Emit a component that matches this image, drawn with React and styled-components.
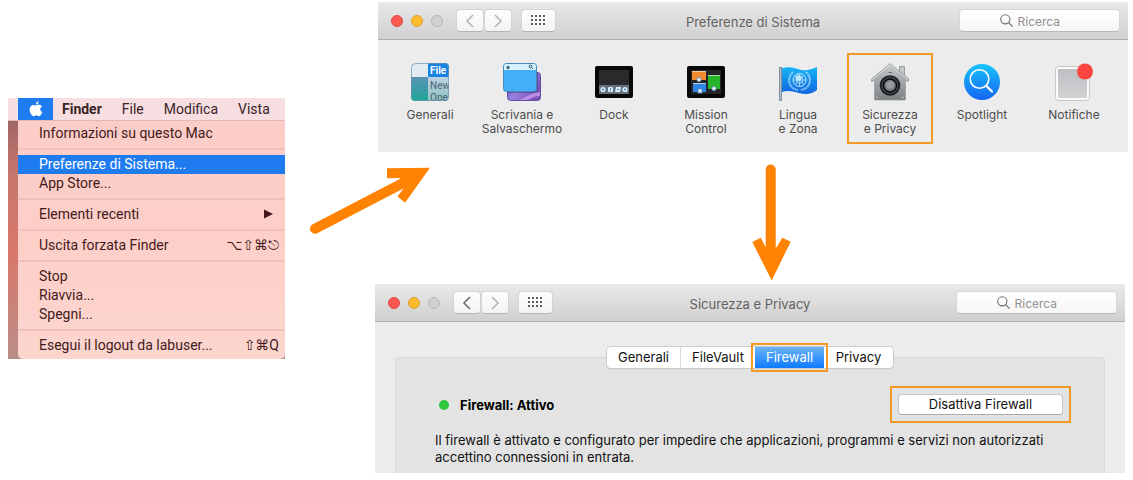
import styled, { createGlobalStyle } from 'styled-components';

const GlobalStyle = createGlobalStyle`
  body {
    margin: 0;
    background: #ffffff;
    font-family: Inter, 'Liberation Sans', sans-serif;
    font-size: 13px;
  }

  button,
  input {
    font: inherit;
  }
`;

const Page = styled.main`
  display: grid;
  grid-template-columns: 277px 90px minmax(0, 1fr);
  align-items: start;
  padding: 2px 5px 0 8px;
`;

/* Finder menu */

const FinderMenu = styled.section`
  grid-column: 1;
  grid-row: 1 / 4;
  margin-top: 96px;
  padding-left: 10px;
  background: linear-gradient(#8f5f63, #c9776c 30%, #d9786b 60%, #b98e88);
  font-family: Roboto, 'Liberation Sans', sans-serif;
  font-size: 14px;
  color: #431a1b;
`;

const MenuBar = styled.div`
  display: flex;
  height: 22px;
  margin-left: -10px;
  padding-left: 10px;
  background: #f7dfe1;
  border-bottom: 1px solid #dfb9ba;
`;

const AppleButton = styled.button`
  width: 35px;
  height: 22px;
  padding: 0;
  border: 0;
  background: #1e7bf0;
  display: flex;
  justify-content: center;
  align-items: center;
`;

const MenuBarButton = styled.button`
  padding: 0 11px 0 9px;
  border: 0;
  background: none;
  line-height: 22px;
  color: #3a2428;
  font-weight: ${(props) => (props.$bold ? 700 : 400)};
`;

const MenuList = styled.div`
  padding: 3px 0 4px;
  background: linear-gradient(#fccdc8, #fdcfc8 50%, #fcd5cf);
  border-radius: 0 0 5px 5px;
`;

const MenuItem = styled.button`
  display: flex;
  justify-content: space-between;
  align-items: center;
  width: 100%;
  height: 19px;
  padding: 0 6px 1px 21px;
  border: 0;
  text-align: left;
  background: ${(props) => (props.$active ? '#1e7bf0' : 'none')};
  color: ${(props) => (props.$active ? '#ffffff' : '#431a1b')};
`;

const Shortcut = styled.span`
  font-family: Roboto, 'DejaVu Sans', sans-serif;
`;

const SubmenuArrow = styled.svg`
  margin-right: 6px;
`;

const MenuSeparator = styled.hr`
  height: 2px;
  margin: 5px 0;
  border: 0;
  background: #efc0bc;
`;

/* Arrows between the steps */

const Connector = styled.div`
  grid-column: 2 / 4;
  grid-row: 2;
  display: flex;
  align-items: flex-start;
  padding: 12px 18px 3px 24px;
`;

const DownArrow = styled.svg`
  margin: 0 auto;
`;

/* Windows */

const Window = styled.section`
  grid-column: 3;
  grid-row: ${(props) => props.$row};
  margin: ${(props) => (props.$row === 1 ? '0 0 0 3px' : '0 3px 0 0')};
  background: #ececec;
`;

const TitleBar = styled.header`
  display: grid;
  grid-template-columns: 1fr auto 1fr;
  align-items: center;
  height: 38px;
  box-sizing: border-box;
  padding: 0 8px;
  background: linear-gradient(#e9e9e9, #d0d0d0);
  border-bottom: 1px solid #acacac;
  border-radius: 3px 3px 0 0;
`;

const Controls = styled.div`
  display: flex;
  align-items: center;
`;

const Lights = styled.div`
  display: flex;
  gap: 8px;
  margin: 0 13px 0 5px;
`;

const Light = styled.button`
  width: 12px;
  height: 12px;
  padding: 0;
  border: 1px solid ${(props) => props.$border};
  border-radius: 50%;
  background: ${(props) => props.$color};
`;

const ToolButton = styled.button`
  display: flex;
  justify-content: center;
  align-items: center;
  width: ${(props) => (props.$wide ? 35 : 28)}px;
  height: 23px;
  margin-left: ${(props) => (props.$wide ? 9 : 0)}px;
  padding: 0;
  border: 1px solid #d4d4d4;
  border-bottom-color: #b6b6b6;
  border-radius: 4px;
  background: linear-gradient(#fefefe, #f3f3f3);
  color: ${(props) => (props.$dim ? '#b5b5b5' : '#6a6a6a')};
`;

const WindowTitle = styled.h1`
  margin: 0;
  padding-top: 3px;
  font-size: 13px;
  font-weight: 400;
  color: #626262;
`;

const SearchBox = styled.label`
  justify-self: end;
  display: flex;
  justify-content: center;
  align-items: center;
  gap: 5px;
  width: 161px;
  height: 23px;
  box-sizing: border-box;
  padding-right: 18px;
  border: 1px solid #d6d6d6;
  border-bottom-color: #b9b9b9;
  border-radius: 4px;
  background: linear-gradient(#ffffff, #f6f6f6);
  font-size: 12px;
`;

const SearchInput = styled.input`
  width: 44px;
  padding: 1px 0 0;
  border: 0;
  outline: 0;
  background: none;

  &::placeholder {
    color: #929292;
    opacity: 1;
  }
`;

/* Preference panes */

const PaneGrid = styled.div`
  display: grid;
  grid-template-columns: repeat(8, minmax(0, 1fr));
  padding: 13px 8px 8px 6px;
`;

const Pane = styled.button`
  display: flex;
  flex-direction: column;
  align-items: center;
  height: 91px;
  margin: 0 3px;
  padding: 8px 0 0;
  border: 2px solid ${(props) => (props.$marked ? '#f39a26' : 'transparent')};
  background: none;
  font-size: 12px;
  line-height: 14px;
  color: #4c4c4c;
  white-space: pre-line;
`;

const PaneLabel = styled.span`
  margin-top: 7px;
`;

/* Firewall settings */

const Settings = styled.div`
  display: flex;
  flex-direction: column;
  padding: 25px 20px 0;
`;

const Tabs = styled.div`
  z-index: 1;
  align-self: center;
  display: flex;
  height: 21px;
  margin-bottom: -11px;
  background: #ffffff;
  border-radius: 4px;
  box-shadow: 0 0 0 1px #cccccc, 0 1px 1px 0 #b5b5b5;
`;

const Tab = styled.button`
  width: ${(props) => (props.$wide ? 74 : 69)}px;
  padding: 0 0 2px;
  border: 0;
  border-right: ${(props) => (props.$line ? '1px solid #d9d9d9' : '0')};
  outline: ${(props) => (props.$active ? '2px solid #f39a26' : '0')};
  outline-offset: 2px;
  background: ${(props) => (props.$active ? 'linear-gradient(#6bb3fa, #0f7bff)' : 'none')};
  color: ${(props) => (props.$active ? '#ffffff' : '#111111')};
`;

const Panel = styled.div`
  padding: 28px 33px 7px 39px;
  background: #e3e3e3;
  border: 1px solid #d9d9d9;
  border-bottom: 0;
  border-radius: 4px 4px 0 0;
`;

const StatusRow = styled.div`
  display: flex;
  align-items: center;
  gap: 11px;
  padding-left: 4px;
`;

const StatusDot = styled.span`
  width: 10px;
  height: 10px;
  border-radius: 50%;
  background: #2dc63f;
`;

const StatusText = styled.strong`
  flex: 1;
  color: #000000;
`;

const ButtonFrame = styled.div`
  padding: 6px;
  border: 2px solid #f39a26;
`;

const PushButton = styled.button`
  display: block;
  width: 165px;
  height: 21px;
  padding: 0 0 2px;
  border: 1px solid #c6c6c6;
  border-bottom-color: #aaaaaa;
  border-radius: 4px;
  background: #ffffff;
  color: #111111;
`;

const Description = styled.p`
  margin: 9px 0 0;
  line-height: 17px;
  color: #111111;
`;

const AppleIcon = () => (
  <svg width="14" height="16" viewBox="0 0 14 16" fill="#ffffff" aria-hidden="true">
    <path d="M9.6 0.4C9.7 2 8.400 3.600 6.900 3.600 6.700 2.100 8.100 0.600 9.600 0.400ZM7.100 4.500C7.700 4.500 8.600 3.800 9.900 3.800 11.300 3.800 12.300 4.500 12.900 5.400 10.500 6.900 10.900 10.100 13.400 11.100 12.700 13 11.400 15.200 10 15.200 8.900 15.200 8.600 14.500 7.300 14.500 6 14.500 5.600 15.200 4.600 15.200 2.800 15.200 0.600 11.800 0.600 8.600 0.600 5.500 2.500 3.900 4.300 3.900 5.500 3.900 6.400 4.500 7.100 4.500Z" />
  </svg>
);

const Chevron = ({ d }) => (
  <svg width="10" height="14" viewBox="0 0 10 14" fill="none" stroke="currentColor" strokeWidth="1.6" aria-hidden="true">
    <path d={d} />
  </svg>
);

const GridIcon = () => (
  <svg width="15" height="11" viewBox="0 0 15 11" fill="#5a5a5a" aria-hidden="true">
    {[0, 4, 8].map((y) =>
      [0, 4, 8, 12].map((x) => <rect key={`${x}-${y}`} x={x} y={y} width="2" height="2" />)
    )}
  </svg>
);

const SearchIcon = () => (
  <svg width="13" height="13" viewBox="0 0 13 13" fill="none" stroke="#6e6e6e" strokeWidth="1.1" aria-hidden="true">
    <circle cx="5.300" cy="5.300" r="4.600" />
    <path d="M8.600 8.600L12.500 12.500" />
  </svg>
);

const GeneralIcon = () => (
  <svg width="38" height="38" viewBox="0 0 38 38" aria-hidden="true">
    <defs>
      <linearGradient id="generalLeft" x2="0" y2="1">
        <stop stopColor="#5a92b6" />
        <stop offset="1" stopColor="#1da695" />
      </linearGradient>
      <linearGradient id="generalRight" x2="0" y2="1">
        <stop stopColor="#bdd2e2" />
        <stop offset="1" stopColor="#8fc3c2" />
      </linearGradient>
      <clipPath id="generalClip">
        <rect width="38" height="38" rx="4" />
      </clipPath>
    </defs>
    <g clipPath="url(#generalClip)">
      <rect width="38" height="38" fill="#e3ebf2" />
      <rect y="14" width="17" height="24" fill="url(#generalLeft)" />
      <rect x="17" y="14" width="21" height="24" fill="url(#generalRight)" />
      <rect x="17" width="21" height="14" fill="#1684e5" />
      <text x="19" y="11" fontFamily="Roboto" fontSize="10" fontWeight="700" fill="#ffffff">File</text>
      <text x="19" y="26" fontFamily="Roboto" fontSize="10" fill="#4b6272">New</text>
      <text x="19" y="38" fontFamily="Roboto" fontSize="10" fill="#4b6272">Ope</text>
    </g>
    <rect x="0.500" y="0.500" width="37" height="37" rx="4" fill="none" stroke="#6f95ad" strokeOpacity="0.700" />
  </svg>
);

const DesktopIcon = () => (
  <svg width="38" height="38" viewBox="0 0 38 38" aria-hidden="true">
    <defs>
      <linearGradient id="desktopBack" x2="1" y2="0.6">
        <stop stopColor="#4c4fa8" />
        <stop offset="0.500" stopColor="#9a7fe0" />
        <stop offset="1" stopColor="#7a4fb8" />
      </linearGradient>
    </defs>
    <rect x="4.500" y="9.500" width="33" height="28" rx="3" fill="url(#desktopBack)" stroke="#5d529f" />
    <path d="M14 37C22 36 26 30 37 29V33C31 33 28 36 24 37Z" fill="#d6a4f2" fillOpacity="0.700" />
    <path d="M4 29.500H33Q34.500 29.500 34.500 28V9" fill="none" stroke="#2b2760" strokeOpacity="0.400" />
    <rect x="0.500" y="0.500" width="33" height="28" rx="3" fill="#45aef8" stroke="#4689b8" />
    <path d="M1 7V3Q1 1 3 1H31Q33 1 33 3V7Z" fill="#d6f0fc" />
    <ellipse cx="5" cy="4.500" rx="1.500" ry="1.700" fill="#3a5f7a" />
    <circle cx="27.500" cy="3.500" r="1.400" fill="none" stroke="#31566f" />
    <path d="M28.500 4.500L30 6" stroke="#31566f" />
  </svg>
);

const DockIcon = () => (
  <svg width="38" height="38" viewBox="0 0 38 38" aria-hidden="true">
    <rect y="3" width="38" height="32" rx="2" fill="#080808" />
    <rect x="4" y="7" width="30" height="24" fill="#2a2a2c" />
    <rect x="4" y="22" width="30" height="9" fill="#62717d" />
    <g fill="#dcecf8">
      <circle cx="8" cy="26.500" r="2.600" />
      <rect x="13" y="24" width="5" height="5" rx="1" />
      <path d="M21 24H26L25 29H20Z" />
      <circle cx="30" cy="26.500" r="2.600" />
    </g>
    <g fill="#377bb5">
      <circle cx="8" cy="26.500" r="1" />
      <rect x="15" y="25" width="1" height="3" />
      <rect x="22" y="26" width="2" height="1" />
      <circle cx="30" cy="26.500" r="1" />
    </g>
  </svg>
);

const MissionIcon = () => (
  <svg width="38" height="38" viewBox="0 0 38 38" aria-hidden="true">
    <rect y="3" width="38" height="32" rx="2" fill="#080808" />
    <rect x="4" y="7" width="30" height="24" fill="#252528" />
    <rect x="5" y="8" width="14" height="9" fill="#f28a2f" />
    <rect x="21" y="12" width="12" height="14" fill="#25b52d" />
    <rect x="6" y="20" width="13" height="9" fill="#2f86e8" />
    <path d="M5 8.500H19M21 12.500H33M6 20.500H19" stroke="#f1e4d8" strokeOpacity="0.700" />
    <g fill="#e3edf6" stroke="#5786b3" strokeWidth="0.800">
      <circle cx="12" cy="16.500" r="2.200" />
      <circle cx="27" cy="25.500" r="2.200" />
      <rect x="11" y="26" width="4" height="4" />
    </g>
  </svg>
);

const FlagIcon = () => (
  <svg width="38" height="38" viewBox="0 0 38 38" aria-hidden="true">
    <defs>
      <linearGradient id="flagBlue" x2="0" y2="1">
        <stop stopColor="#16b5f6" />
        <stop offset="1" stopColor="#1165e0" />
      </linearGradient>
    </defs>
    <path d="M3 5C12 3 16 5 22 7 28 8 33 6 38 4V27C33 31 27 32 20 30 13 28 8 27 3 29Z" fill="url(#flagBlue)" />
    <g fill="none" stroke="#d9f1ff">
      <circle cx="20.500" cy="17" r="6.500" strokeWidth="0.900" />
      <circle cx="20.500" cy="17" r="3.500" strokeWidth="0.700" />
      <path d="M20.500 10.500V23.500M14 17H27M16 12.500L25 21.500M25 12.500L16 21.500" strokeWidth="0.600" />
      <path d="M14 9C7.500 15 9 25 19 27M27 9C33.500 15 32 25 22 27" strokeWidth="2" strokeDasharray="2 0.500" strokeOpacity="0.600" />
    </g>
    <path d="M16 14.500L19 11.500 23 13.500 22 17 18 18Z" fill="#cfeeff" fillOpacity="0.800" />
    <rect x="0.500" y="4.500" width="2" height="33" fill="#b5c0ca" stroke="#6e7e8d" strokeWidth="0.800" />
  </svg>
);

const SecurityIcon = () => (
  <svg width="38" height="38" viewBox="0 0 38 38" aria-hidden="true">
    <defs>
      <linearGradient id="houseGrey" x2="0" y2="1">
        <stop stopColor="#c9cccd" />
        <stop offset="1" stopColor="#7c8184" />
      </linearGradient>
    </defs>
    <path d="M28.500 12V3.500H33.500V15" fill="#c5c9ca" stroke="#9a9e9f" />
    <path d="M19 0.500L0.500 16V18.500L3.500 17.500V37H34.500V17.500L38 18.500V16Z" fill="url(#houseGrey)" stroke="#979b9c" strokeWidth="0.700" />
    <path d="M1 17L19 2L37 17" fill="none" stroke="#e0e3e3" strokeWidth="0.800" />
    <path d="M17.500 9.500H21" stroke="#6b7072" />
    <circle cx="19" cy="22.500" r="10.300" fill="#1e2122" />
    <circle cx="19" cy="22.500" r="7.800" fill="#060707" stroke="#454b4d" strokeWidth="1.200" />
    <circle cx="19" cy="22.500" r="5.800" fill="#777c7e" />
    <circle cx="19" cy="22" r="3.800" fill="#969b9d" />
    <circle cx="6" cy="34.500" r="0.800" fill="#d4d8d8" />
    <circle cx="32" cy="34.500" r="0.800" fill="#d4d8d8" />
  </svg>
);

const SpotlightIcon = () => (
  <svg width="38" height="38" viewBox="0 0 38 38" aria-hidden="true">
    <defs>
      <linearGradient id="spotlightBlue" x2="0" y2="1">
        <stop stopColor="#19c4fb" />
        <stop offset="1" stopColor="#1464f2" />
      </linearGradient>
    </defs>
    <circle cx="19" cy="19" r="18" fill="url(#spotlightBlue)" />
    <g fill="none" stroke="#ffffff" strokeLinecap="round">
      <circle cx="16.500" cy="16" r="9.300" strokeWidth="1.600" />
      <path d="M23.500 23L29 28.500" strokeWidth="2.200" />
    </g>
  </svg>
);

const NotificationsIcon = () => (
  <svg width="38" height="38" viewBox="0 0 38 38" aria-hidden="true">
    <defs>
      <linearGradient id="notifyGrey" x2="0" y2="1">
        <stop stopColor="#bebfc2" />
        <stop offset="1" stopColor="#d1d2d4" />
      </linearGradient>
    </defs>
    <rect x="0.500" y="3.500" width="34" height="34" rx="3" fill="#fafafa" stroke="#c6c6c6" />
    <rect x="3" y="6" width="29" height="29" rx="1" fill="url(#notifyGrey)" />
    <circle cx="30" cy="8.500" r="8" fill="#fb4540" />
  </svg>
);

const panes = [
  { label: 'Generali', Icon: GeneralIcon },
  { label: 'Scrivania e\nSalvaschermo', Icon: DesktopIcon },
  { label: 'Dock', Icon: DockIcon },
  { label: 'Mission\nControl', Icon: MissionIcon },
  { label: 'Lingua\ne Zona', Icon: FlagIcon },
  { label: 'Sicurezza\ne Privacy', Icon: SecurityIcon, marked: true },
  { label: 'Spotlight', Icon: SpotlightIcon },
  { label: 'Notifiche', Icon: NotificationsIcon },
];

const WindowBar = ({ title, canGoBack }) => (
  <TitleBar>
    <Controls>
      <Lights>
        <Light $color="#fc5753" $border="#df4744" aria-label="Chiudi" />
        <Light $color="#fdbc2c" $border="#de9f34" aria-label="Riduci" />
        <Light $color="#d0d0d0" $border="#b9b9b9" aria-label="Ingrandisci" />
      </Lights>
      <ToolButton $dim={!canGoBack} aria-label="Indietro">
        <Chevron d="M8 1L2 7L8 13" />
      </ToolButton>
      <ToolButton $dim aria-label="Avanti">
        <Chevron d="M2 1L8 7L2 13" />
      </ToolButton>
      <ToolButton $wide aria-label="Mostra tutte">
        <GridIcon />
      </ToolButton>
    </Controls>
    <WindowTitle>{title}</WindowTitle>
    <SearchBox>
      <SearchIcon />
      <SearchInput type="text" placeholder="Ricerca" aria-label="Ricerca" />
    </SearchBox>
  </TitleBar>
);

const App = () => {
  return (
    <>
      <GlobalStyle />
      <Page>
        <FinderMenu>
          <MenuBar>
            <AppleButton aria-label="Apple">
              <AppleIcon />
            </AppleButton>
            <MenuBarButton $bold>Finder</MenuBarButton>
            <MenuBarButton>File</MenuBarButton>
            <MenuBarButton>Modifica</MenuBarButton>
            <MenuBarButton>Vista</MenuBarButton>
          </MenuBar>
          <MenuList>
            <MenuItem>Informazioni su questo Mac</MenuItem>
            <MenuSeparator />
            <MenuItem $active>Preferenze di Sistema...</MenuItem>
            <MenuItem>App Store...</MenuItem>
            <MenuSeparator />
            <MenuItem>
              Elementi recenti
              <SubmenuArrow width="9" height="10" viewBox="0 0 9 10" fill="#431a1b" aria-hidden="true">
                <path d="M0 0.500L9 5L0 9.500Z" />
              </SubmenuArrow>
            </MenuItem>
            <MenuSeparator />
            <MenuItem>
              Uscita forzata Finder
              <Shortcut>⌥⇧⌘⎋</Shortcut>
            </MenuItem>
            <MenuSeparator />
            <MenuItem>Stop</MenuItem>
            <MenuItem>Riavvia...</MenuItem>
            <MenuItem>Spegni...</MenuItem>
            <MenuSeparator />
            <MenuItem>
              Esegui il logout da labuser...
              <Shortcut>⇧⌘Q</Shortcut>
            </MenuItem>
          </MenuList>
        </FinderMenu>

        <Window $row={1}>
          <WindowBar title="Preferenze di Sistema" />
          <PaneGrid>
            {panes.map(({ label, Icon, marked }) => (
              <Pane key={label} $marked={marked}>
                <Icon />
                <PaneLabel>{label}</PaneLabel>
              </Pane>
            ))}
          </PaneGrid>
        </Window>

        <Connector>
          <svg width="122" height="76" viewBox="0 0 122 76" fill="#ff8303" aria-hidden="true">
            <path d="M6 64.700L94 19" stroke="#ff8303" strokeWidth="10" strokeLinecap="round" />
            <path d="M121 3.700L78 4.300V14.300L90.500 14L95.500 23.300L88.500 32.300L96 38.700Z" />
          </svg>
          <DownArrow width="42" height="117" viewBox="0 0 42 117" fill="#ff8303" aria-hidden="true">
            <path d="M20.700 5.500V88" stroke="#ff8303" strokeWidth="10" strokeLinecap="round" />
            <path d="M21.700 116.500L2.300 78L10.700 73.700L15.700 83.300H26.700L32.300 73.700L40.700 77.700Z" />
          </DownArrow>
        </Connector>

        <Window $row={3}>
          <WindowBar title="Sicurezza e Privacy" canGoBack />
          <Settings>
            <Tabs>
              <Tab $wide $line>Generali</Tab>
              <Tab $wide>FileVault</Tab>
              <Tab $active>Firewall</Tab>
              <Tab>Privacy</Tab>
            </Tabs>
            <Panel>
              <StatusRow>
                <StatusDot />
                <StatusText>Firewall: Attivo</StatusText>
                <ButtonFrame>
                  <PushButton>Disattiva Firewall</PushButton>
                </ButtonFrame>
              </StatusRow>
              <Description>
                Il firewall è attivato e configurato per impedire che applicazioni, programmi e servizi non autorizzati
                accettino connessioni in entrata.
              </Description>
            </Panel>
          </Settings>
        </Window>
      </Page>
    </>
  );
};

export default App;
